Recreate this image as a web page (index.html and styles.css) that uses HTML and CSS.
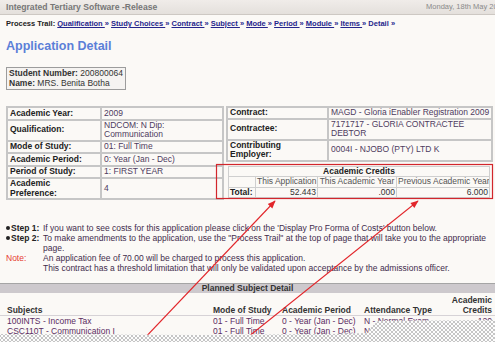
FILE: index.html
```html
<!DOCTYPE html>
<html lang="en">
<head>
    <meta charset="UTF-8">
    <title>Application Detail</title>
    <link rel="stylesheet" href="styles.css">
</head>
<body>
<div class="topbar">
    <span class="app-name">Integrated Tertiary Software -Release</span>
    <span class="today">Monday, 18th May 2009</span>
</div>
<div class="trail">
    Process Trail:
    <a href="#">Qualification </a><span class="sep">»</span>
    <a href="#">Study Choices </a><span class="sep">»</span>
    <a href="#">Contract </a><span class="sep">»</span>
    <a href="#">Subject </a><span class="sep">»</span>
    <a href="#">Mode </a><span class="sep">»</span>
    <a href="#">Period </a><span class="sep">»</span>
    <a href="#">Module </a><span class="sep">»</span>
    <a href="#">Items </a><span class="sep">»</span>
    <span class="current">Detail </span><span class="sep">»</span>
</div>

<h1 class="page-title">Application Detail</h1>

<div class="student">
    <div><b>Student Number:</b> 200800064</div>
    <div><b>Name:</b> MRS. Benita Botha</div>
</div>

<div class="details">
    <table class="info info-left">
        <colgroup><col class="w-label-l"><col></colgroup>
        <tr><td class="label">Academic Year:</td><td class="value">2009</td></tr>
        <tr><td class="label">Qualification:</td><td class="value">NDCOM: N Dip:<br>Communication</td></tr>
        <tr><td class="label">Mode of Study:</td><td class="value">01: Full Time</td></tr>
        <tr><td class="label">Academic Period:</td><td class="value">0: Year (Jan - Dec)</td></tr>
        <tr><td class="label">Period of Study:</td><td class="value">1: FIRST YEAR</td></tr>
        <tr><td class="label">Academic<br>Preference:</td><td class="value">4</td></tr>
    </table>
    <div class="right-col">
        <table class="info info-right">
            <colgroup><col class="w-label-r"><col></colgroup>
            <tr><td class="label">Contract:</td><td class="value">MAGD - Gloria iEnabler Registration 2009</td></tr>
            <tr><td class="label">Contractee:</td><td class="value">7171717 - GLORIA CONTRACTEE<br>DEBTOR</td></tr>
            <tr><td class="label">Contributing<br>Employer:</td><td class="value">0004I - NJOBO (PTY) LTD K</td></tr>
        </table>
        <table class="credits">
            <colgroup>
                <col class="w-c1"><col class="w-c2"><col class="w-c3"><col>
            </colgroup>
            <tr><td class="credits-title" colspan="4">Academic Credits</td></tr>
            <tr>
                <td></td>
                <td class="col-head">This Application</td>
                <td class="col-head">This Academic Year</td>
                <td class="col-head">Previous Academic Year</td>
            </tr>
            <tr>
                <td class="total">Total:</td>
                <td class="num">52.443</td>
                <td class="num">.000</td>
                <td class="num">6.000</td>
            </tr>
        </table>
    </div>
</div>

<div class="steps">
    <div class="tag"><span class="dot"></span>Step 1:</div>
    <div>If you want to see costs for this application please click on the 'Display Pro Forma of Costs' button below.</div>
    <div class="tag"><span class="dot"></span>Step 2:</div>
    <div>To make amendments to the application, use the "Process Trail" at the top of page that will take you to the appropriate<br>page.</div>
    <div class="note">Note:</div>
    <div>An application fee of 70.00 will be charged to process this application.<br>This contract has a threshold limitation that will only be validated upon acceptance by the admissions officer.</div>
</div>

<div class="planned">
    <div class="planned-title">Planned Subject Detail</div>
    <table class="subjects">
        <colgroup>
            <col class="w-subject"><col class="w-mode"><col class="w-period"><col class="w-type"><col>
        </colgroup>
        <tr>
            <th class="first">Subjects</th>
            <th>Mode of Study</th>
            <th>Academic Period</th>
            <th>Attendance Type</th>
            <th class="right">Academic<br>Credits</th>
        </tr>
        <tr>
            <td class="first">100INTS - Income Tax</td>
            <td>01 - Full Time</td>
            <td>0 - Year (Jan - Dec)</td>
            <td>N - Normal Exam</td>
            <td class="right">.120</td>
        </tr>
        <tr>
            <td class="first">CSC110T - Communication I</td>
            <td>01 - Full Time</td>
            <td>0 - Year (Jan - Dec)</td>
            <td>N - Normal Exam</td>
            <td class="right">.120</td>
        </tr>
    </table>
</div>

<svg class="marks" width="495" height="342" viewBox="0 0 495 342">
    <defs>
        <marker id="head" viewBox="0 0 10 10" refX="9" refY="5" markerWidth="9" markerHeight="8"
                orient="auto" markerUnits="userSpaceOnUse">
            <path d="M0 1 L10 5 L0 9 z" fill="#e2262b"/>
        </marker>
    </defs>
    <rect x="216.5" y="164.5" width="276" height="34" fill="none" stroke="#d2262c" stroke-width="1.2"/>
    <line x1="141" y1="342" x2="275" y2="201" stroke="#e2262b" stroke-width="1.1" marker-end="url(#head)"/>
    <line x1="243" y1="341" x2="418" y2="201" stroke="#e2262b" stroke-width="1.1" marker-end="url(#head)"/>
</svg>
<div class="torn"></div>
</body>
</html>
```

FILE: styles.css
```css
*{
    box-sizing: border-box;
}

body{
    margin: 0;
    width: 495px;
    height: 342px;
    overflow: hidden;
    position: relative;
    background: #fbf9f6;
    font-family: "Liberation Sans", Arial, sans-serif;
    font-size: 8.5px;
    line-height: 10px;
    color: #222;
}

/* top bar */
.topbar{
    display: flex;
    justify-content: space-between;
    align-items: center;
    height: 15px;
    padding-left: 6px;
    background: linear-gradient(#f0ece9, #e4e0dc);
    border-bottom: 1px solid #cdc8c3;
}
.app-name{
    font-weight: bold;
    color: #777;
    font-size: 8.6px;
}
.today{
    color: #8a8a8a;
    font-size: 7.5px;
    margin-right: -11px;
    white-space: nowrap;
}

.trail{
    padding: 4px 6px 0;
    font-size: 7.5px;
    font-weight: bold;
    white-space: nowrap;
    color: #222;
}
.trail a,
.trail .sep,
.trail .current{
    color: #25258c;
}

.page-title{
    margin: 10px 6px 0;
    font-size: 12.5px;
    line-height: 14px;
    color: #5b7fd8;
}

.student{
    width: fit-content;
    margin: 14px 0 0 6px;
    border: 1px solid #9c9c9c;
    background: #f5f3f1;
    padding: 1px 2px;
    line-height: 9.5px;
    color: #333;
    white-space: nowrap;
}

/* detail tables */
.details{
    display: flex;
    align-items: flex-start;
    gap: 2px;
    margin: 16px 0 0 6px;
}
.info{
    border-collapse: collapse;
    table-layout: fixed;
}
.info td{
    border: 2px solid #c6c6c6;
    padding: 0 2px;
    height: 12.5px;
    line-height: 9.5px;
    vertical-align: middle;
    white-space: nowrap;
}
.info .label{
    font-weight: bold;
    color: #222;
}
.info .value{
    color: #4e3b5e;
}
.info-left{
    width: 218px;
}
.w-label-l{
    width: 94px;
}
.right-col{
    width: 267px;
}
.info-right{
    width: 267px;
}
.info-right td{
    height: 11px;
}
.w-label-r{
    width: 101px;
}

.credits{
    width: 262px;
    margin: 4px 0 0 2px;
    border-collapse: collapse;
    table-layout: fixed;
}
.credits td{
    border: 1px solid #cfcfcf;
    padding: 0 1px;
    height: 10.5px;
    line-height: 9px;
    white-space: nowrap;
    overflow: hidden;
}
.w-c1{
    width: 27px;
}
.w-c2{
    width: 62px;
}
.w-c3{
    width: 79px;
}
.credits-title{
    text-align: center;
    font-weight: bold;
    color: #222;
}
.col-head{
    text-align: center;
    color: #555;
}
.credits .total{
    font-weight: bold;
}
.credits .num{
    text-align: right;
    color: #333;
}

/* steps */
.steps{
    display: grid;
    grid-template-columns: 37px auto;
    margin: 23px 6px 0;
    color: #3f2c4c;
    white-space: nowrap;
}
.steps .tag{
    font-weight: bold;
    color: #222;
}
.dot{
    display: inline-block;
    width: 4px;
    height: 4px;
    border-radius: 50%;
    background: #222;
    margin-right: 1px;
    vertical-align: 1px;
}
.steps .note{
    color: #e63b30;
}

/* planned subjects */
.planned{
    margin-top: 10px;
}
.planned-title{
    height: 10px;
    line-height: 9px;
    border-top: 1px solid #a5a5a5;
    background: #cdc9cd;
    text-align: center;
    font-weight: bold;
    color: #333;
}
.subjects{
    width: 100%;
    border-collapse: collapse;
    table-layout: fixed;
    margin-top: 2px;
}
.subjects th{
    text-align: left;
    vertical-align: bottom;
    padding: 0 3px;
    color: #333;
    border-bottom: 1px solid #d6d2d6;
}
.subjects td{
    padding: 0 3px;
    color: #5a2c62;
    white-space: nowrap;
    overflow: hidden;
}
.subjects .first{
    padding-left: 7px;
}
.subjects .right{
    text-align: right;
}
.w-subject{
    width: 210px;
}
.w-mode{
    width: 69px;
}
.w-period{
    width: 82px;
}
.w-type{
    width: 80px;
}

/* annotation overlay */
.marks{
    position: absolute;
    left: 0;
    top: 0;
    z-index: 1;
}

/* torn screenshot edge */
.torn{
    position: absolute;
    left: 0;
    top: 316px;
    width: 495px;
    height: 26px;
    z-index: 2;
    background-color: #fdfdfd;
    background-image:
        radial-gradient(circle, #c4c4c4 0.7px, transparent 1px),
        radial-gradient(circle, #c4c4c4 0.7px, transparent 1px);
    background-size: 4px 4px;
    background-position: 0 0, 2px 2px;
    clip-path: polygon(0 18px, 200px 19px, 330px 18px, 368px 17px, 372px 10px, 378px 5px, 495px 4px, 495px 26px, 0 26px);
}
```
